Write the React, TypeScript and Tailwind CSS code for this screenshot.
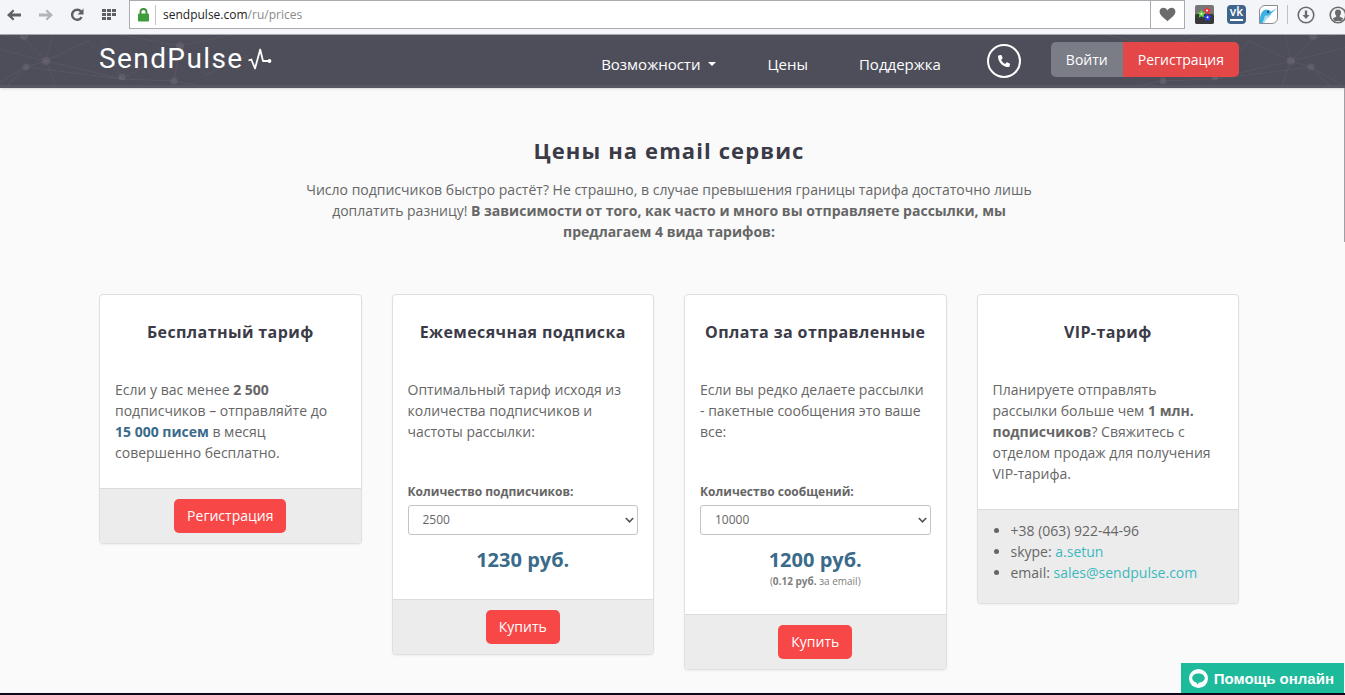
import type { ReactNode } from 'react'
import { FaPhone } from 'react-icons/fa'

function Strong({ children }: { children: ReactNode }) {
  return <strong className="font-bold">{children}</strong>
}

function BrowserBar() {
  return (
    <div className="flex h-[35px] items-start overflow-hidden border-b border-[#a9abb0] bg-[#f3f5f8]">
      <div className="flex h-[29px] w-[129px] shrink-0 items-center justify-between pl-[7px] pr-3 text-[#5f6062]">
        <button aria-label="Назад">
          <svg width="14" height="12" viewBox="0 0 14 12" fill="currentColor">
            <path d="M0 6 6 .5 7.4 2 5 4.6H14v2.8H5L7.4 10 6 11.5z" />
          </svg>
        </button>
        <button aria-label="Вперёд" className="text-[#b3b4b6]">
          <svg width="14" height="12" viewBox="0 0 14 12" fill="currentColor">
            <path d="M14 6 8 .5 6.600 2 9 4.600H0v2.800h9L6.600 10 8 11.500z" />
          </svg>
        </button>
        <button aria-label="Обновить">
          <svg width="14" height="14" viewBox="0 0 14 14">
            <path d="M11 3.600A5 5 0 1 0 11.600 9" fill="none" stroke="currentColor" strokeWidth="2.400" />
            <path d="M13.500.5v6H7.500z" fill="currentColor" />
          </svg>
        </button>
        <button aria-label="Экспресс-панель">
          <svg width="15" height="11" viewBox="0 0 15 11" fill="currentColor">
            {[0, 5, 10].map((x) =>
              [0, 4, 8].map((y) =>
                x === 10 && y === 8 ? null : <rect key={`${x}-${y}`} x={x} y={y} width="4" height="3" />,
              ),
            )}
          </svg>
        </button>
      </div>

      <div className="flex h-[29px] grow items-center border border-[#a9abb0] bg-white">
        <svg className="ml-2 shrink-0" width="11" height="14" viewBox="0 0 11 14">
          <path d="M2.500 6V4a3 3 0 0 1 6 0v2" fill="none" stroke="#3b8f36" strokeWidth="1.800" />
          <rect y="5.500" width="11" height="8" rx="1" fill="#3f9c3a" />
        </svg>
        <span className="ml-1.5 h-5 w-px bg-[#c4c4c4]" />
        <p className="ml-[7px] grow font-['Open_Sans',sans-serif] text-xs text-[#222]">
          sendpulse.com<span className="text-[#8a8a8a]">/ru/prices</span>
        </p>
        <button aria-label="В закладки" className="flex h-full w-[34px] items-center justify-center border-l border-[#a9abb0]">
          <svg width="17" height="15" viewBox="0 0 17 15">
            <path
              d="M8.500 14.300C4 10.500.6 8 .6 4.600.6 2.300 2.300.8 4.400.8c1.800 0 3.200 1 4.100 2.600C9.400 1.800 10.800.8 12.600.8c2.100 0 3.800 1.500 3.800 3.800 0 3.400-3.400 5.900-7.900 9.700z"
              fill="#6a6b6d"
            />
          </svg>
        </button>
      </div>

      <div className="flex h-[29px] w-[160px] shrink-0 items-center pl-2.5">
        <svg className="shrink-0" width="19" height="19" viewBox="0 0 19 19">
          <rect width="19" height="19" rx="2" fill="#777" />
          <rect y="9" width="19" height="10" rx="2" fill="#383838" />
          <path d="m12 1.500 1.400 2.500 3 .5-2.200 2.100.6 3-2.800-1.400-2.700 1.400.5-3-2.100-2.100 2.900-.5z" fill="#f0323c" />
          <path d="m6.500 4.500 1.400 2.700 3 .4-2.200 2.100.6 3-2.800-1.400-2.700 1.400.5-3-2.100-2.100 2.900-.4z" fill="#5fd440" />
          <path d="m12.500 8 1.400 2.700 3 .4-2.200 2.100.6 3-2.800-1.400-2.700 1.400.5-3-2.100-2.100 2.900-.4z" fill="#2c3fe6" />
          <circle cx="12" cy="5.500" r="1" fill="#fff" />
          <circle cx="6.500" cy="8.700" r="1" fill="#fff" />
          <circle cx="12.500" cy="12.200" r="1" fill="#fff" />
        </svg>
        <span className="ml-[13px] flex h-[19px] w-[19px] shrink-0 flex-col items-center rounded-sm bg-[#3f648c] font-['Open_Sans',sans-serif] text-xs leading-[14px] font-semibold text-white">
          vk
          <span className="h-0.5 w-[13px] bg-white" />
        </span>
        <svg className="ml-[13px] shrink-0" width="19" height="19" viewBox="0 0 19 19">
          <path d="M6 .5h12.500V13a5.500 5.500 0 0 1-5.500 5.500H.5V6A5.500 5.500 0 0 1 6 .5z" fill="#fff" stroke="#8c8c8c" />
          <path d="M1 18C.5 11 2.500 4.500 7.500 4.500c2.200 0 3.700.8 4.400 2.300L18 3l-5.800 5.600C11.800 12 6.500 12 5 18z" fill="#3fb0e4" />
          <path d="M6 10.500c2 .5 4.500-.3 6-1.800-.3 4-5 4-6.800 9.300H3.500z" fill="#a8dcf4" />
          <circle cx="9" cy="7" r="1" fill="#234" />
        </svg>
        <span className="ml-[9px] h-[19px] w-px shrink-0 bg-[#c0c1c4]" />
        <svg className="ml-[9px] shrink-0" width="18" height="18" viewBox="0 0 18 18" fill="none" stroke="#6a6b6d">
          <circle cx="9" cy="9" r="7.800" strokeWidth="1.600" />
          <path d="M9 4.500v6" strokeWidth="2.400" />
          <path d="M5.500 9h7L9 13z" fill="#6a6b6d" stroke="none" />
        </svg>
        <svg className="ml-3.5 shrink-0" width="18" height="18" viewBox="0 0 18 18">
          <circle cx="9" cy="9" r="7.800" fill="none" stroke="#6a6b6d" strokeWidth="1.600" />
          <path d="M9 3.500c2 0 3 1.300 3 3.100 0 1.400-.5 2.400-1.200 3.100v1l3.400 1.600-1.700 2.700H5.500l-1.700-2.700 3.400-1.600v-1C6.500 9 6 8 6 6.600c0-1.800 1-3.100 3-3.100z" fill="#6a6b6d" />
        </svg>
      </div>
    </div>
  )
}

/* Faint node network behind the navigation */
function Network({ className }: { className: string }) {
  return (
    <svg className={className} width="270" height="53" viewBox="0 0 270 53" stroke="#8a8488" strokeOpacity=".16" fill="#8a7c84">
      <path
        fill="none"
        d="M-10 12 46 26 24 3M46 26 26 32-10 53M46 26 52 0M46 26 88 6M46 26 122 44 180 11M46 26 56 53M26 32 5 53M24 3-10-2M122 44 100 0M122 44 174 46 180 11 230 0M174 46 212 53M180 11 122 0M180 11 206 40 250 20M26 32 122 44M88 6 122 44"
      />
      <g fillOpacity=".28" stroke="none">
        <circle cx="46" cy="26" r="4" />
        <circle cx="26" cy="32" r="3.500" />
        <circle cx="24" cy="1" r="4" />
        <circle cx="122" cy="42" r="3.500" />
        <circle cx="180" cy="11" r="4" />
        <circle cx="174" cy="46" r="3.500" />
      </g>
    </svg>
  )
}

function SiteHeader() {
  return (
    <header className="relative overflow-hidden border-b-[3px] border-[#575763] bg-[#4d4e5a] pr-[7px] text-white shadow-sm">
      <Network className="absolute top-0 left-0 overflow-visible" />
      <Network className="absolute top-0 right-2 -scale-x-100 overflow-visible" />
      <div className="relative mx-auto flex h-[50px] max-w-[1140px] items-start">
        <a href="#" className="flex h-12 grow items-center">
          <span className="font-[Roboto,sans-serif] text-[28px] leading-none tracking-wider">SendPulse</span>
          <svg className="ml-1 shrink-0" width="24" height="24" viewBox="0 0 24 24" fill="none" stroke="#fff" strokeWidth="1.800">
            <path d="M.5 13.500 3.300 12.500 7 21.500 12.200 2.500 15 14h6" strokeLinejoin="round" />
            <circle cx="21.500" cy="14" r="1.900" fill="#fff" stroke="none" />
          </svg>
        </a>
        <nav className="flex h-[58px] shrink-0 items-center text-[15px]">
          <a href="#" className="flex items-center">
            Возможности
            <span className="ml-2 border-x-4 border-t-4 border-x-transparent border-t-white" />
          </a>
          <a href="#" className="ml-[51px]">Цены</a>
          <a href="#" className="ml-[51px]">Поддержка</a>
        </nav>
        <a href="#" aria-label="Телефон" className="mt-[9px] ml-[46px] flex h-[34px] w-[34px] shrink-0 items-center justify-center rounded-full border-2 border-white">
          <FaPhone size={12} className="-scale-x-100" />
        </a>
        <div className="mt-[7px] ml-[30px] flex h-[35px] shrink-0 overflow-hidden rounded-[5px] text-sm">
          <button className="bg-[#7a7c86] px-[15px]">Войти</button>
          <button className="bg-[#e44748] px-[15px]">Регистрация</button>
        </div>
      </div>
    </header>
  )
}

function Card({ title, footer, children }: { title: string; footer: ReactNode; children: ReactNode }) {
  return (
    <section className="overflow-hidden rounded border border-[#dfdfdf] bg-white shadow-xs">
      <div className="px-[15px] pt-[26px] pb-[25px]">
        <h2 className="mb-9 text-center text-base leading-[22px] font-bold tracking-wide whitespace-nowrap text-[#3b3b48]">
          {title}
        </h2>
        {children}
      </div>
      <div className="border-t border-[#dcdcdc] bg-[#ececec] p-2.5">{footer}</div>
    </section>
  )
}

function RedButton({ children }: { children: ReactNode }) {
  return (
    <button className="mx-auto block h-[34px] rounded-[5px] bg-[#f84747] px-[13px] text-sm text-white">{children}</button>
  )
}

function Quantity({ id, label, value }: { id: string; label: string; value: string }) {
  return (
    <div className="mt-[41px]">
      <label htmlFor={id} className="block text-xs leading-[17px] font-bold">{label}</label>
      <div className="relative mt-[5px]">
        <select
          id={id}
          defaultValue={value}
          className="block h-[30px] w-full appearance-none rounded-[3px] border border-[#c4c4c4] bg-white px-3.5 text-xs"
        >
          <option>{value}</option>
        </select>
        <svg className="pointer-events-none absolute top-3 right-1" width="9" height="7" viewBox="0 0 9 7">
          <path d="m.8 1 3.700 3.800L8.200 1" fill="none" stroke="#555" strokeWidth="1.700" />
        </svg>
      </div>
    </div>
  )
}

function Price({ children }: { children: ReactNode }) {
  return <p className="mt-[11px] text-center text-xl leading-7 font-bold text-[#3a6b8a]">{children}</p>
}

export default function App() {
  return (
    <div className="flex min-h-screen flex-col bg-[#fafafa] font-['Open_Sans',sans-serif] text-sm leading-[21px] text-[#666]">
      <BrowserBar />
      <SiteHeader />

      <main className="grow pr-[7px] pb-4">
        <div className="mx-auto max-w-[750px] pt-[47px] text-center">
          <h1 className="text-[22px] leading-[30px] font-bold tracking-wider text-[#3b3b48]">Цены на email сервис</h1>
          <p className="mt-3.5">
            Число подписчиков быстро растёт? Не страшно, в случае превышения границы тарифа достаточно лишь доплатить
            разницу! <Strong>В зависимости от того, как часто и много вы отправляете рассылки, мы предлагаем 4 вида тарифов:</Strong>
          </p>
        </div>

        <div className="mx-auto mt-[52px] grid max-w-[1140px] grid-cols-4 items-start gap-[30px]">
          <Card title="Бесплатный тариф" footer={<RedButton>Регистрация</RedButton>}>
            <p>
              Если у вас менее <Strong>2 500</Strong> подписчиков – отправляйте до{' '}
              <strong className="font-bold text-[#3a6b8a]">15 000 писем</strong> в месяц совершенно бесплатно.
            </p>
          </Card>

          <Card title="Ежемесячная подписка" footer={<RedButton>Купить</RedButton>}>
            <p>Оптимальный тариф исходя из количества подписчиков и частоты рассылки:</p>
            <Quantity id="subscribers" label="Количество подписчиков:" value="2500" />
            <Price>1230 руб.</Price>
          </Card>

          <Card title="Оплата за отправленные" footer={<RedButton>Купить</RedButton>}>
            <p>Если вы редко делаете рассылки - пакетные сообщения это ваше все:</p>
            <Quantity id="messages" label="Количество сообщений:" value="10000" />
            <Price>1200 руб.</Price>
            <p className="text-center text-[10px] leading-[15px] text-[#808080]">
              (<Strong>0.12 руб.</Strong> за email)
            </p>
          </Card>

          <Card
            title="VIP-тариф"
            footer={
              <ul className="mb-2.5 list-disc pl-[23px]">
                <li>+38 (063) 922-44-96</li>
                <li>skype: <a href="#" className="text-[#3cb8bf]">a.setun</a></li>
                <li>email: <a href="mailto:sales@sendpulse.com" className="text-[#3cb8bf]">sales@sendpulse.com</a></li>
              </ul>
            }
          >
            <p>
              Планируете отправлять рассылки больше чем <Strong>1 млн. подписчиков</Strong>? Свяжитесь с отделом продаж
              для получения VIP-тарифа.
            </p>
          </Card>
        </div>
      </main>

      <div className="h-0.5 bg-[#12061a]" />

      <button className="fixed right-px bottom-0.5 flex h-[30px] items-center bg-[#1dba9c] pr-2.5 pl-2 font-['Liberation_Sans',sans-serif] text-[15px] font-bold text-white">
        <svg className="mr-1.5" width="19" height="19" viewBox="0 0 19 19">
          <circle cx="9.500" cy="9.500" r="9.500" fill="#fff" />
          <path d="M9.500 4.500c3.600 0 6.300 2 6.300 4.600 0 2.600-2.700 4.600-6.300 4.600l-.6 2.100-1.700-2.300C4.700 12.900 3.200 11.200 3.200 9.100c0-2.600 2.700-4.600 6.300-4.600z" fill="#1dba9c" />
        </svg>
        Помощь онлайн
      </button>
      {/* scrollbar thumb */}
      <div className="fixed top-[88px] right-0 h-[154px] w-px bg-[#a0a0a4]" />
    </div>
  )
}
